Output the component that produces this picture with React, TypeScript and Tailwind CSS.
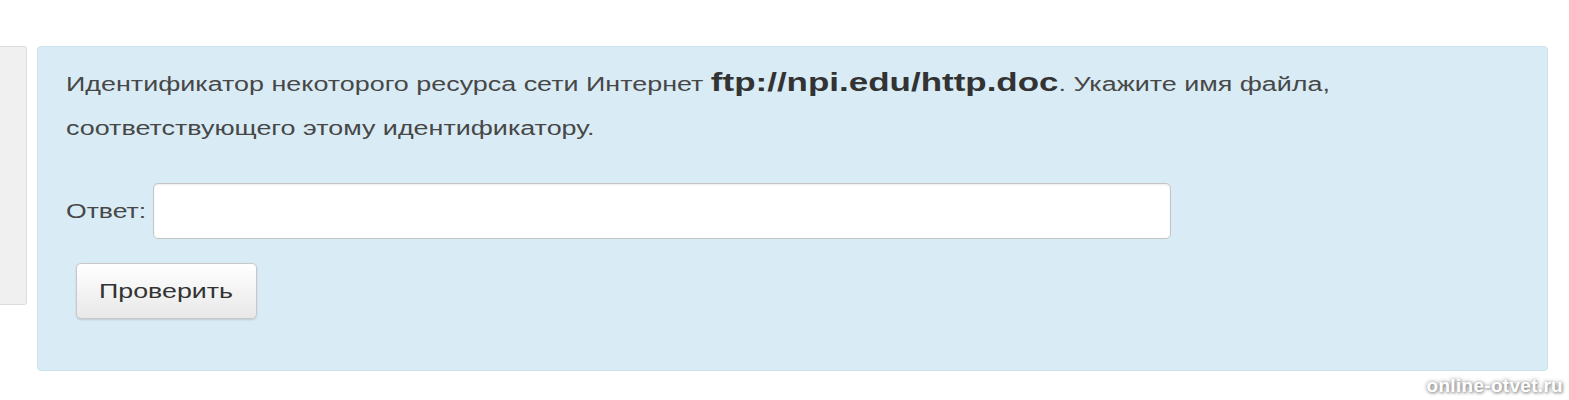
import React, { useState } from 'react';

export default function App() {
  const [answer, setAnswer] = useState('');

  return (
    <div className="relative w-[1569px] h-[400px] bg-white overflow-hidden font-['Liberation_Sans',Arial,sans-serif] text-[#474747]">
      <div className="flex items-start gap-[10px] pt-[46px]">
        {/* left sidebar stub */}
        <div className="w-[27px] h-[259px] shrink-0 bg-[#f0f0f0] border border-l-0 border-[#dcdcdc] rounded-r-[3px]" />

        {/* task card */}
        <div className="w-[1511px] h-[325px] bg-[#d9ecf6] border border-[#c9e2ee] rounded-[4px] pl-[28px] pt-[13px]">
          {/* the source screenshot is stretched horizontally, hence scale-x */}
          <div className="text-[20px] leading-[44px]">
            <div className="whitespace-nowrap origin-left scale-x-[1.345]">
              Идентификатор некоторого ресурса сети Интернет{' '}
              <b className="text-[26px] text-[#333]">ftp://npi.edu/http.doc</b>. Укажите имя файла,
            </div>
            <div className="whitespace-nowrap origin-left scale-x-[1.345]">
              соответствующего этому идентификатору.
            </div>
          </div>

          <div className="flex items-center mt-[33px]">
            <label className="text-[20px] w-[87px] origin-left scale-x-[1.33]">Ответ:</label>
            <input
              type="text"
              value={answer}
              onChange={(e) => setAnswer(e.target.value)}
              className="w-[1018px] h-[56px] bg-white border border-[#c4c4c4] rounded-[5px] px-3 text-[20px] outline-none shadow-[inset_0_1px_2px_rgba(0,0,0,0.08)]"
            />
          </div>

          <button className="mt-[24px] ml-[10px] w-[181px] h-[56px] text-[20px] text-[#333] border border-[#c8c8c8] rounded-[5px] bg-gradient-to-b from-white to-[#e8e8e8] shadow-[0_1px_2px_rgba(0,0,0,0.15)]">
            <span className="inline-block scale-x-[1.34]">Проверить</span>
          </button>
        </div>
      </div>

      <span className="absolute right-[6px] bottom-[5px] text-[19px] leading-none font-bold text-white tracking-[0.3px] [text-shadow:0_0_4px_#8a8a8a,1px_1px_3px_#9a9a9a]">
        online-otvet.ru
      </span>
    </div>
  );
}
